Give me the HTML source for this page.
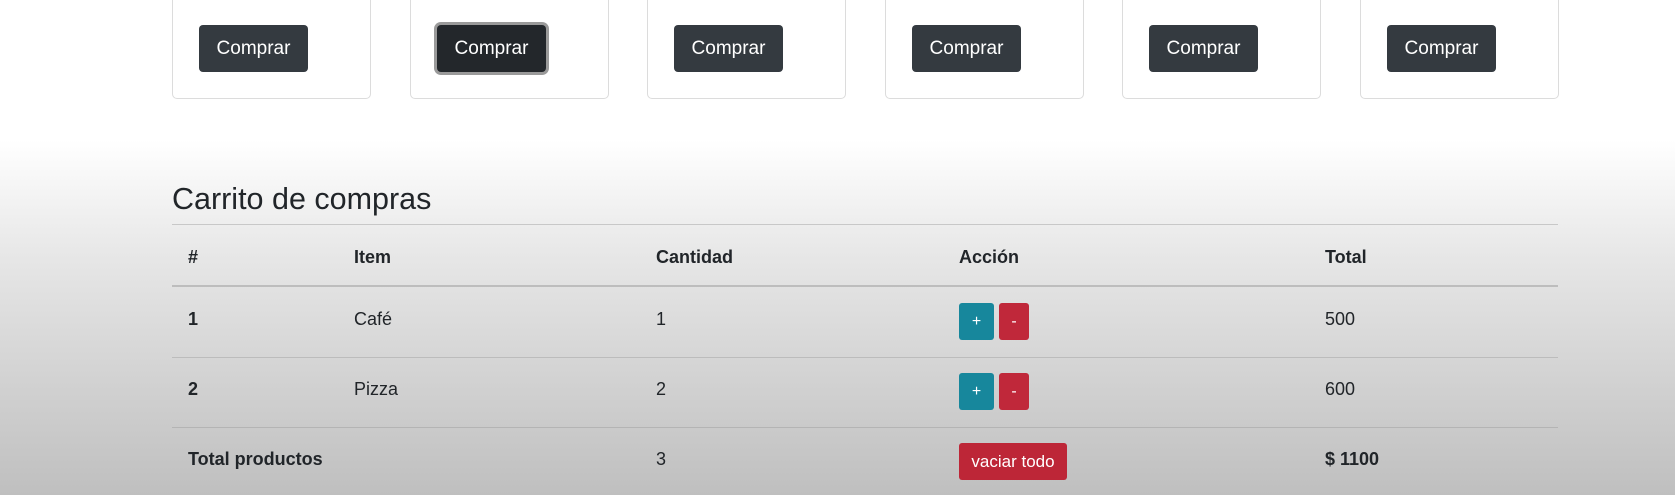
<!DOCTYPE html>
<html><head><meta charset="utf-8"><style>
body{margin:0;width:1675px;height:495px;overflow:hidden;font-family:"Liberation Sans",sans-serif;color:#212529;
background:linear-gradient(#fff 0,#fff 140px,#e6e6e6 260px,#d2d2d2 380px,#bfbfbf 495px);position:relative}
.card{position:absolute;top:-5px;width:199px;height:104px;border:1px solid #dcdcdc;border-radius:5px;background:#fff;box-sizing:border-box}
.btn{position:absolute;left:26px;top:29px;width:109px;height:47px;background:#343a40;color:#fff;border-radius:4px;font-size:19px;line-height:47px;text-align:center;box-sizing:border-box}
.focus{background:#23272b;box-shadow:0 0 0 3px #9a9a9a}
h2{position:absolute;left:172px;top:182px;margin:0;font-size:30.5px;font-weight:normal}
.line{position:absolute;left:172px;width:1386px;height:1px;background:#c8c8c8}
.t{position:absolute;font-size:18px}
.b{font-weight:bold}
.sb{position:absolute;color:#fff;border-radius:3px;font-size:16px;text-align:center}
</style></head><body>
<div class="card" style="left:172px"><div class="btn">Comprar</div></div>
<div class="card" style="left:410px"><div class="btn focus">Comprar</div></div>
<div class="card" style="left:647px"><div class="btn">Comprar</div></div>
<div class="card" style="left:885px"><div class="btn">Comprar</div></div>
<div class="card" style="left:1122px"><div class="btn">Comprar</div></div>
<div class="card" style="left:1360px"><div class="btn">Comprar</div></div>
<h2>Carrito de compras</h2>
<div class="line" style="top:224px"></div>
<div class="line" style="top:285px;height:2px;background:#bdbdbd"></div>
<div class="line" style="top:357px;background:#bcbcbc"></div>
<div class="line" style="top:427px;background:#b4b4b4"></div>
<div class="t b" style="left:188px;top:247px">#</div>
<div class="t b" style="left:354px;top:247px">Item</div>
<div class="t b" style="left:656px;top:247px">Cantidad</div>
<div class="t b" style="left:959px;top:247px">Acción</div>
<div class="t b" style="left:1325px;top:247px">Total</div>
<div class="t b" style="left:188px;top:309px">1</div>
<div class="t" style="left:354px;top:309px">Café</div>
<div class="t" style="left:656px;top:309px">1</div>
<div class="t" style="left:1325px;top:309px">500</div>
<div class="sb" style="left:959px;top:303px;width:35px;height:37px;line-height:37px;background:#17879c">+</div>
<div class="sb" style="left:999px;top:303px;width:30px;height:37px;line-height:37px;background:#c0283a">-</div>
<div class="t b" style="left:188px;top:379px">2</div>
<div class="t" style="left:354px;top:379px">Pizza</div>
<div class="t" style="left:656px;top:379px">2</div>
<div class="t" style="left:1325px;top:379px">600</div>
<div class="sb" style="left:959px;top:373px;width:35px;height:37px;line-height:37px;background:#17879c">+</div>
<div class="sb" style="left:999px;top:373px;width:30px;height:37px;line-height:37px;background:#c0283a">-</div>
<div class="t b" style="left:188px;top:449px">Total productos</div>
<div class="t" style="left:656px;top:449px">3</div>
<div class="sb" style="left:959px;top:443px;width:108px;height:37px;line-height:37px;background:#bd2637;font-size:17px">vaciar todo</div>
<div class="t b" style="left:1325px;top:449px">$ 1100</div>
</body></html>
